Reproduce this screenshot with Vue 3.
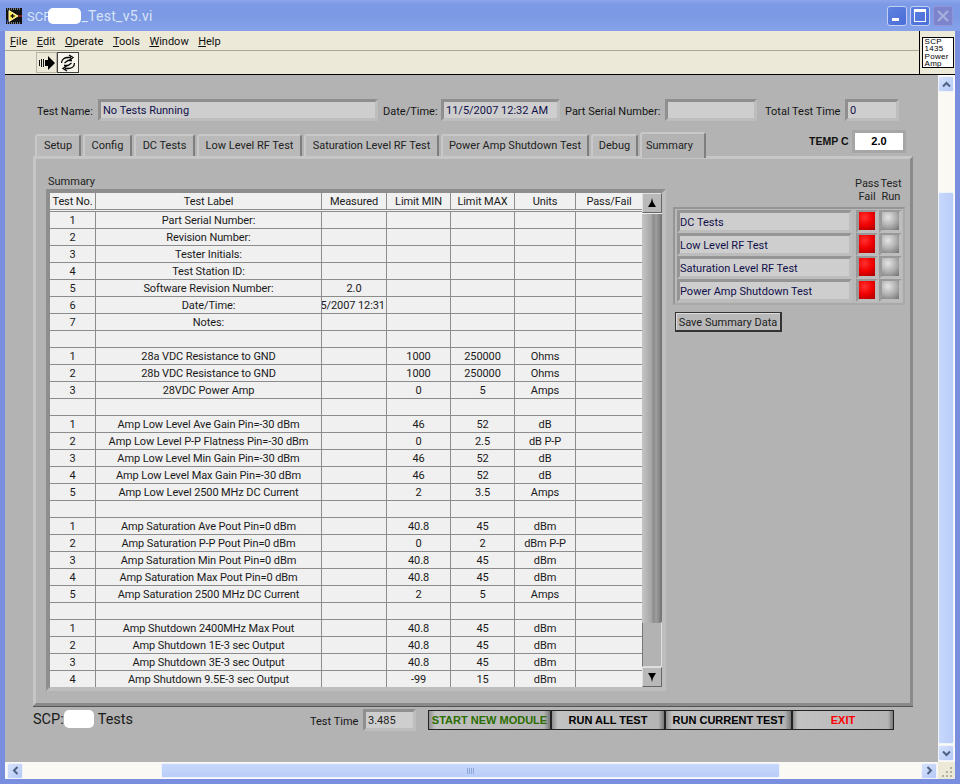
<template>
  <div class="window">
    <div class="titlebar">
      <svg class="vi-icon" width="16" height="16" viewBox="0 0 16 16">
        <rect width="16" height="16" fill="#111" />
        <path d="M1 1h14M1 15h14" stroke="#ddd" stroke-dasharray="1 1" />
        <path d="M3 2.500 L3 13.500 L12 8 Z" fill="#ffe84a" stroke="#fffbc0" />
        <path d="M4.500 8 H8.500 M6.500 6 V10" stroke="#111" stroke-width="1.300" />
        <path d="M12 8 H16" stroke="#e03030" />
        <path d="M0 13 H3" stroke="#3050d0" />
      </svg>
      <span class="title-text">SCP<span class="redact title-redact"></span><span class="title-rest">_Test_v5.vi</span></span>
      <div class="win-btns">
        <div class="win-btn"><span class="glyph-min"></span></div>
        <div class="win-btn"><span class="glyph-max"></span></div>
        <div class="win-btn close">
          <svg width="14" height="14" viewBox="0 0 14 14"><path d="M2 2 L12 12 M12 2 L2 12" stroke="#a5afd9" stroke-width="2.400" /></svg>
        </div>
      </div>
    </div>

    <div class="chrome">
      <div class="chrome-left">
        <div class="menubar">
          <span v-for="m in menus" :key="m.rest" class="menu-item"><u>{{ m.key }}</u>{{ m.rest }}</span>
        </div>
        <div class="toolbar">
          <div class="tool-btn">
            <svg width="16" height="14" viewBox="0 0 16 14">
              <path d="M0 4h1v6H0zM2 3h1v8H2zM4 3h1v8H4z" fill="#111" />
              <path d="M6 4 H9 V0 L16 7 L9 14 V10 H6 Z" fill="#000" />
            </svg>
          </div>
          <div class="tool-btn pressed">
            <svg width="18" height="18" viewBox="0 0 18 18" fill="none" stroke="#000" stroke-width="1.300">
              <path d="M2.500 9 C2.500 5 6 3.500 9 3.500 H12 M10 1 L14 3.500 L10 6.500" />
              <path d="M15.500 9 C15.500 13 12 14.500 9 14.500 H6 M8 11.500 L4 14.500 L8 17" />
              <path d="M5.500 9 L9 6.500 H13 M12.500 9 L9 11.500 H5" />
            </svg>
          </div>
        </div>
      </div>
      <div class="vi-box">
        <div class="vi-label">SCP<br />1435<br />Power<br />Amp</div>
      </div>
    </div>

    <div class="client">
      <div class="client-main">
        <div class="panel-area">
          <div class="info-row">
            <span class="lbl l-name">Test Name:</span>
            <div class="field f-name">No Tests Running</div>
            <span class="lbl l-date">Date/Time:</span>
            <div class="field f-date">11/5/2007 12:32 AM</div>
            <span class="lbl l-serial">Part Serial Number:</span>
            <div class="field f-serial"></div>
            <span class="lbl l-total">Total Test Time</span>
            <div class="field f-total">0</div>
          </div>

          <div class="tab-row">
            <div
              v-for="t in tabs"
              :key="t.name"
              class="tab"
              :class="{ active: t.name === 'Summary' }"
              :style="{ width: t.w + 'px' }"
            >{{ t.name }}</div>
            <div class="temp">
              <span class="temp-label">TEMP C</span>
              <div class="field temp-field">2.0</div>
            </div>
          </div>

          <div class="tab-panel">
            <div class="table-col">
              <div class="summary-label">Summary</div>
              <div class="table-frame">
                <div class="table-wrap">
                  <div class="t-row t-head">
                    <div v-for="h in headers" :key="h" class="cell">{{ h }}</div>
                  </div>
                  <div v-for="(r, i) in rows" :key="i" class="t-row">
                    <div v-for="(c, j) in r" :key="j" class="cell" :class="{ clip: c.length > 14 && j === 2 }">{{ c }}</div>
                  </div>
                </div>
                <div class="table-scroll">
                  <div class="ts-btn"><svg width="10" height="10" viewBox="0 0 10 10"><path d="M5 0 L6 4 L9 9 H1 L4 4 Z" fill="#000" /></svg></div>
                  <div class="ts-thumb"></div>
                  <div class="ts-track"></div>
                  <div class="ts-btn"><svg width="10" height="10" viewBox="0 0 10 10"><path d="M1 1 H9 L6 6 L5 10 L4 6 Z" fill="#000" /></svg></div>
                </div>
              </div>
            </div>

            <div class="side-col">
              <div class="led-heads">
                <div class="led-head">Pass<br />Fail</div>
                <div class="led-head">Test<br />Run</div>
              </div>
              <div class="led-box">
                <div v-for="s in sections" :key="s" class="led-row">
                  <div class="led-name">{{ s }}</div>
                  <div class="led red"></div>
                  <div class="led gray"></div>
                </div>
              </div>
              <div class="save-btn">Save Summary Data</div>
            </div>
          </div>

          <div class="bottom-row">
            <div class="module-name">SCP:<span class="redact bottom-redact"></span>Tests</div>
            <span class="lbl l-time">Test Time</span>
            <div class="field f-time">3.485</div>
            <div class="action start">START NEW MODULE</div>
            <div class="action run-all">RUN ALL TEST</div>
            <div class="action run-cur">RUN CURRENT TEST</div>
            <div class="action exit">EXIT</div>
          </div>
        </div>

        <div class="vscroll">
          <div class="sb-btn"><svg width="9" height="7" viewBox="0 0 9 7"><path d="M1 5.500 L4.500 2 L8 5.500" fill="none" stroke="#4d6185" stroke-width="2" /></svg></div>
          <div class="sb-gap-top"></div>
          <div class="sb-thumb-v"></div>
          <div class="sb-btn"><svg width="9" height="7" viewBox="0 0 9 7"><path d="M1 1.500 L4.500 5 L8 1.500" fill="none" stroke="#4d6185" stroke-width="2" /></svg></div>
        </div>
      </div>

      <div class="hscroll">
        <div class="sb-btn"><svg width="7" height="9" viewBox="0 0 7 9"><path d="M5.500 1 L2 4.500 L5.500 8" fill="none" stroke="#4d6185" stroke-width="2" /></svg></div>
        <div class="sb-gap-left"></div>
        <div class="sb-thumb-h"><span class="grip"></span></div>
        <div class="sb-gap-right"></div>
        <div class="sb-btn"><svg width="7" height="9" viewBox="0 0 7 9"><path d="M1.500 1 L5 4.500 L1.500 8" fill="none" stroke="#4d6185" stroke-width="2" /></svg></div>
        <div class="corner">
          <svg width="17" height="17" viewBox="0 0 17 17" fill="#b5b2a0">
            <rect x="12" y="5" width="2" height="2" />
            <rect x="8" y="9" width="2" height="2" />
            <rect x="12" y="9" width="2" height="2" />
            <rect x="4" y="13" width="2" height="2" />
            <rect x="8" y="13" width="2" height="2" />
            <rect x="12" y="13" width="2" height="2" />
          </svg>
        </div>
      </div>
    </div>
  </div>
</template>

<script setup>
const menus = [
  { key: 'F', rest: 'ile' },
  { key: 'E', rest: 'dit' },
  { key: 'O', rest: 'perate' },
  { key: 'T', rest: 'ools' },
  { key: 'W', rest: 'indow' },
  { key: 'H', rest: 'elp' }
]

const tabs = [
  { name: 'Setup', w: 46 },
  { name: 'Config', w: 49 },
  { name: 'DC Tests', w: 61 },
  { name: 'Low Level RF Test', w: 105 },
  { name: 'Saturation Level RF Test', w: 135 },
  { name: 'Power Amp Shutdown Test', w: 148 },
  { name: 'Debug', w: 47 },
  { name: 'Summary', w: 66 }
]

const headers = ['Test No.', 'Test Label', 'Measured', 'Limit MIN', 'Limit MAX', 'Units', 'Pass/Fail']

const sections = ['DC Tests', 'Low Level RF Test', 'Saturation Level RF Test', 'Power Amp Shutdown Test']

const blank = ['', '', '', '', '', '', '']

// no, label, measured, min, max, units, pass/fail
const rows = [
  ['1', 'Part Serial Number:', '', '', '', '', ''],
  ['2', 'Revision Number:', '', '', '', '', ''],
  ['3', 'Tester Initials:', '', '', '', '', ''],
  ['4', 'Test Station ID:', '', '', '', '', ''],
  ['5', 'Software Revision Number:', '2.0', '', '', '', ''],
  ['6', 'Date/Time:', '11/5/2007 12:31 AM', '', '', '', ''],
  ['7', 'Notes:', '', '', '', '', ''],
  blank,
  ['1', '28a VDC Resistance to GND', '', '1000', '250000', 'Ohms', ''],
  ['2', '28b VDC Resistance to GND', '', '1000', '250000', 'Ohms', ''],
  ['3', '28VDC Power Amp', '', '0', '5', 'Amps', ''],
  blank,
  ['1', 'Amp Low Level Ave Gain Pin=-30 dBm', '', '46', '52', 'dB', ''],
  ['2', 'Amp Low Level P-P Flatness Pin=-30 dBm', '', '0', '2.5', 'dB P-P', ''],
  ['3', 'Amp Low Level Min Gain Pin=-30 dBm', '', '46', '52', 'dB', ''],
  ['4', 'Amp Low Level Max Gain Pin=-30 dBm', '', '46', '52', 'dB', ''],
  ['5', 'Amp Low Level 2500 MHz DC Current', '', '2', '3.5', 'Amps', ''],
  blank,
  ['1', 'Amp Saturation Ave Pout Pin=0 dBm', '', '40.8', '45', 'dBm', ''],
  ['2', 'Amp Saturation P-P Pout Pin=0 dBm', '', '0', '2', 'dBm P-P', ''],
  ['3', 'Amp Saturation Min Pout Pin=0 dBm', '', '40.8', '45', 'dBm', ''],
  ['4', 'Amp Saturation Max Pout Pin=0 dBm', '', '40.8', '45', 'dBm', ''],
  ['5', 'Amp Saturation 2500 MHz DC Current', '', '2', '5', 'Amps', ''],
  blank,
  ['1', 'Amp Shutdown 2400MHz Max Pout', '', '40.8', '45', 'dBm', ''],
  ['2', 'Amp Shutdown 1E-3 sec Output', '', '40.8', '45', 'dBm', ''],
  ['3', 'Amp Shutdown 3E-3 sec Output', '', '40.8', '45', 'dBm', ''],
  ['4', 'Amp Shutdown 9.5E-3 sec Output', '', '-99', '15', 'dBm', '']
]
</script>

<style>
html, body {
  margin: 0;
  padding: 0;
  background: #7a96df;
}
</style>

<style scoped>
.window {
  width: 960px;
  height: 784px;
  box-sizing: border-box;
  background: #7a8ee0;
  padding: 0 5px 5px 5px;
  font-family: Roboto, "Liberation Sans", Arial, sans-serif;
  font-size: 11px;
  color: #111;
  display: flex;
  flex-direction: column;
  overflow: hidden;
}

.titlebar {
  height: 31px;
  flex: none;
  margin: 0 -5px;
  padding: 0 7px 0 6px;
  background: linear-gradient(to bottom, #8ba6ec 0, #7d9ae6 4px, #7b99e4 50%, #86a2ea 100%);
  display: flex;
  align-items: center;
  gap: 5px;
}

.vi-icon {
  flex: none;
}

.title-text {
  font-size: 13px;
  color: #d8e4f8;
}

.title-rest {
  font-size: 14px;
  letter-spacing: 0.3px;
}

.redact {
  display: inline-block;
  background: #fff;
  border-radius: 5px;
}

.title-redact {
  width: 33px;
  height: 16px;
  margin-left: -3px;
  vertical-align: -3px;
}

.win-btns {
  margin-left: auto;
  display: flex;
  gap: 3px;
}

.win-btn {
  width: 20px;
  height: 20px;
  box-sizing: border-box;
  border: 1px solid #c3d0f2;
  border-radius: 3px;
  background: linear-gradient(135deg, #5e82e0, #4a6cd8);
  display: flex;
  align-items: center;
  justify-content: center;
}

.win-btn.close {
  background: #7d83cd;
  border-color: #8f97d8;
}

.glyph-min {
  width: 7px;
  height: 3px;
  background: #fff;
  margin-top: 7px;
  margin-right: 4px;
}

.glyph-max {
  width: 10px;
  height: 9px;
  border: 1px solid #fff;
  border-top-width: 3px;
}

.chrome {
  height: 43px;
  flex: none;
  background: #ece9d8;
  border-bottom: 1px solid #000;
  display: flex;
}

.chrome-left {
  flex: 1;
}

.menubar {
  height: 17px;
  padding-top: 2px;
  border-bottom: 1px solid #a9a797;
  display: flex;
  align-items: center;
  padding-left: 5px;
  gap: 9.500px;
  font-size: 11px;
  color: #111;
}

.toolbar {
  height: 23px;
  display: flex;
  align-items: center;
  padding-left: 31px;
}

.tool-btn {
  width: 21px;
  height: 21px;
  border: 1px solid #b8b5a5;
  display: flex;
  align-items: center;
  justify-content: center;
  box-sizing: border-box;
}

.tool-btn.pressed {
  width: 22px;
  background: #f8f6ec;
  border: 1px solid #444;
}

.vi-box {
  width: 36px;
  box-sizing: border-box;
  border-left: 1px solid #000;
  display: flex;
  align-items: center;
  justify-content: center;
}

.vi-label {
  width: 32px;
  height: 31px;
  box-sizing: border-box;
  background: #fff;
  border: 1px solid #000;
  font-family: "Liberation Sans", Arial, sans-serif;
  font-size: 8px;
  letter-spacing: 0.3px;
  line-height: 7.400px;
  padding-left: 2px;
  overflow: hidden;
  color: #000;
}

.client {
  flex: 1;
  min-height: 0;
  display: flex;
  flex-direction: column;
}

.client-main {
  flex: 1;
  min-height: 0;
  display: flex;
}

.panel-area {
  flex: 1;
  background: #b3b3b3;
  display: flex;
  flex-direction: column;
  padding: 24px 0 0 28px;
  min-width: 0;
}

.lbl {
  flex: none;
  box-sizing: border-box;
  padding-top: 2px;
  color: #151515;
  white-space: nowrap;
}

.field {
  flex: none;
  box-sizing: border-box;
  height: 22px;
  background: #cecece;
  border: 3px solid;
  border-color: #8f8f8f #bdbdbd #bdbdbd #8f8f8f;
  line-height: 18px;
  padding-left: 2px;
  color: #10104a;
  white-space: nowrap;
  overflow: hidden;
}

.info-row {
  height: 22px;
  display: flex;
  align-items: center;
  padding-left: 4px;
}

.l-name { width: 61px; }
.f-name { width: 280px; }
.l-date { width: 53px; margin-left: 5px; }
.f-date { width: 119px; margin-left: 5px; }
.l-serial { width: 93px; margin-left: 5px; }
.f-serial { width: 92px; margin-left: 7px; }
.l-total { width: 72px; margin-left: 8px; }
.f-total { width: 54px; margin-left: 8px; }

.tab-row {
  height: 26px;
  margin-top: 9px;
  display: flex;
  align-items: flex-end;
  padding-left: 2px;
  position: relative;
  z-index: 1;
  gap: 2px;
}

.tab {
  flex: none;
  box-sizing: border-box;
  height: 22px;
  text-align: center;
  line-height: 20px;
  background: #b9b9b9;
  border-top: 2px solid #c8c8c8;
  border-left: 2px solid #c8c8c8;
  border-right: 2px solid #7e7e7e;
  border-radius: 3px 3px 0 0;
  color: #222;
  white-space: nowrap;
}

.tab.active {
  height: 26px;
  margin-bottom: -2px;
  line-height: 24px;
  text-align: left;
  padding-left: 4px;
  background: #b3b3b3;
}

.temp {
  margin-left: 101px;
  align-self: flex-start;
  display: flex;
  align-items: center;
  gap: 3px;
}

.temp-label {
  width: 40px;
  padding-bottom: 2px;
  font-family: "Liberation Sans", Arial, sans-serif;
  font-size: 10.500px;
  font-weight: bold;
  color: #111;
  white-space: nowrap;
}

.temp-field {
  width: 54px;
  height: 23px;
  background: #fff;
  border-color: #a6a6a6;
  line-height: 16px;
  text-align: center;
  font-family: "Liberation Sans", Arial, sans-serif;
  font-weight: bold;
  color: #000;
  padding-left: 0;
}

.tab-panel {
  width: 880px;
  height: 550px;
  box-sizing: border-box;
  flex: none;
  border: 3px solid;
  border-color: #c6c6c6 #8a8a8a #8a8a8a #c6c6c6;
  box-shadow: 0 1px 0 #555;
  display: flex;
  padding: 13px 0 0 10px;
}

.table-col {
  width: 627px;
  flex: none;
}

.summary-label {
  height: 17px;
  line-height: 19px;
  padding-left: 2px;
  color: #222;
}

.table-frame {
  width: 620px;
  display: flex;
  box-sizing: border-box;
  border: 4px solid;
  border-color: #8e8e8e #bebebe #bebebe #8e8e8e;
}

.table-wrap {
  width: 592px;
  flex: none;
  background: #f0f0f0;
}

.t-row {
  display: grid;
  grid-template-columns: 46px 226px 65px 64px 64px 61px 66px;
  height: 17px;
  box-sizing: border-box;
  border-bottom: 1px solid #8c8c8c;
}

.t-row:last-child {
  border-bottom: none;
  height: 16px;
}

.t-head {
  height: 19px;
  border-bottom: 3px double #8c8c8c;
}

.cell {
  box-sizing: border-box;
  border-right: 1px solid #8c8c8c;
  text-align: center;
  line-height: 18px;
  letter-spacing: -0.1px;
  white-space: nowrap;
  overflow: hidden;
  color: #1a1a1a;
  min-width: 0;
}

.cell:last-child {
  border-right: none;
}

.cell.clip {
  display: flex;
  justify-content: center;
}

.table-scroll {
  width: 20px;
  flex: none;
  display: flex;
  flex-direction: column;
  background: #b7b7b7;
}

.ts-btn {
  height: 20px;
  flex: none;
  box-sizing: border-box;
  border: 1px solid;
  border-color: #e0e0e0 #666 #666 #e0e0e0;
  background: #b9b9b9;
  display: flex;
  align-items: center;
  justify-content: center;
}

.ts-thumb {
  height: 409px;
  flex: none;
  background: linear-gradient(to right, #c4c4c4, #a8a8a8 45%, #8a8a8a 60%, #a0a0a0 70%, #707070);
  border-top: 1px solid #eee;
  border-radius: 0 0 3px 3px;
}

.ts-track {
  flex: 1;
  background: #b3b3b3;
  border-left: 1px solid #777;
  border-right: 1px solid #ddd;
  border-bottom: 1px solid #ddd;
}

.side-col {
  flex: 1;
}

.led-heads {
  display: flex;
  justify-content: flex-end;
  width: 230px;
  height: 35px;
  padding-top: 5px;
  box-sizing: border-box;
}

.led-head {
  width: 24px;
  text-align: center;
  line-height: 13px;
  color: #222;
  white-space: nowrap;
}

.led-box {
  width: 232px;
  box-sizing: border-box;
  background: #b9b9b9;
  border: 2px solid;
  border-color: #959595 #a9a9a9 #a9a9a9 #959595;
  padding: 1px 0 1px 2px;
}

.led-row {
  height: 23px;
  display: flex;
}

.led-name {
  width: 175px;
  height: 23px;
  box-sizing: border-box;
  background: #cecece;
  border: 3px solid;
  border-color: #959595 #bdbdbd #bdbdbd #959595;
  line-height: 19px;
  color: #10104a;
  white-space: nowrap;
}

.led {
  width: 22px;
  height: 23px;
  flex: none;
  box-sizing: border-box;
  border: 3px solid;
  border-top-width: 2px;
  border-color: #999 #bdbdbd #bdbdbd #999;
  background-clip: padding-box;
}

.led.red {
  margin-left: 4px;
  background-image: radial-gradient(circle at 35% 30%, #ff3030 0, #f00000 50%, #a00000 100%);
}

.led.gray {
  margin-left: 1px;
  width: 23px;
  background-image: radial-gradient(circle at 35% 30%, #e4e4e4 0, #b0b0b0 50%, #707070 100%);
}

.save-btn {
  width: 107px;
  height: 20px;
  box-sizing: border-box;
  margin: 7px 0 0 2px;
  border: 1px solid #333;
  border-right-width: 2px;
  border-bottom-width: 2px;
  background: #b9b9b9;
  box-shadow: inset 1px 1px 0 #ddd;
  line-height: 19px;
  text-align: center;
  color: #222;
}

.bottom-row {
  height: 26px;
  margin-top: 1px;
  display: flex;
  align-items: center;
}

.module-name {
  width: 277px;
  flex: none;
  margin-bottom: 2px;
  font-size: 14.500px;
  color: #1a1a1a;
}

.bottom-redact {
  width: 30px;
  height: 18px;
  vertical-align: -4px;
  margin-right: 4px;
}

.l-time { width: 45px; }

.f-time {
  width: 53px;
  margin-left: 8px;
  color: #222;
}

.action {
  flex: none;
  box-sizing: border-box;
  height: 20px;
  border: 1px solid #222;
  background: linear-gradient(to right, #8e8e8e, #c2c2c2 5%, #b4b4b4 95%, #777);
  line-height: 18px;
  text-align: center;
  font-family: "Liberation Sans", Arial, sans-serif;
  font-weight: bold;
  color: #000;
  white-space: nowrap;
}

.start { width: 123px; margin-left: 12px; color: #2a6d00; }
.run-all { width: 114px; }
.run-cur { width: 127px; }
.exit { width: 102px; color: #f00; }

.vscroll {
  width: 17px;
  flex: none;
  background: #faf9f3;
  display: flex;
  flex-direction: column;
  padding: 1px 1px 1px 0;
  box-sizing: border-box;
}

.sb-btn {
  flex: none;
  width: 16px;
  height: 16px;
  box-sizing: border-box;
  border: 1px solid #f0f3fc;
  border-radius: 2px;
  background: linear-gradient(135deg, #d6e2fc, #b5c9f7);
  display: flex;
  align-items: center;
  justify-content: center;
}

.sb-gap-top {
  height: 100px;
  flex: none;
}

.sb-thumb-v {
  flex: 1;
  background: linear-gradient(to right, #c8d8fb, #b9cdf9);
  border: 1px solid #eef2fd;
  border-radius: 2px;
  margin-bottom: 1px;
}

.hscroll {
  height: 17px;
  flex: none;
  background: #faf9f3;
  display: flex;
  align-items: center;
  padding-left: 2px;
}

.sb-gap-left {
  width: 138px;
  flex: none;
}

.sb-thumb-h {
  width: 619px;
  height: 15px;
  flex: none;
  box-sizing: border-box;
  background: linear-gradient(to bottom, #c8d8fb, #b9cdf9);
  border: 1px solid #eef2fd;
  border-radius: 2px;
  display: flex;
  align-items: center;
  justify-content: center;
}

.grip {
  width: 7px;
  height: 6px;
  background: repeating-linear-gradient(to right, #8ea6d8 0 1px, transparent 1px 2px);
}

.sb-gap-right {
  flex: 1;
}

.corner {
  width: 17px;
  height: 17px;
  flex: none;
  background: #ece9d8;
  margin-left: 1px;
}
</style>
